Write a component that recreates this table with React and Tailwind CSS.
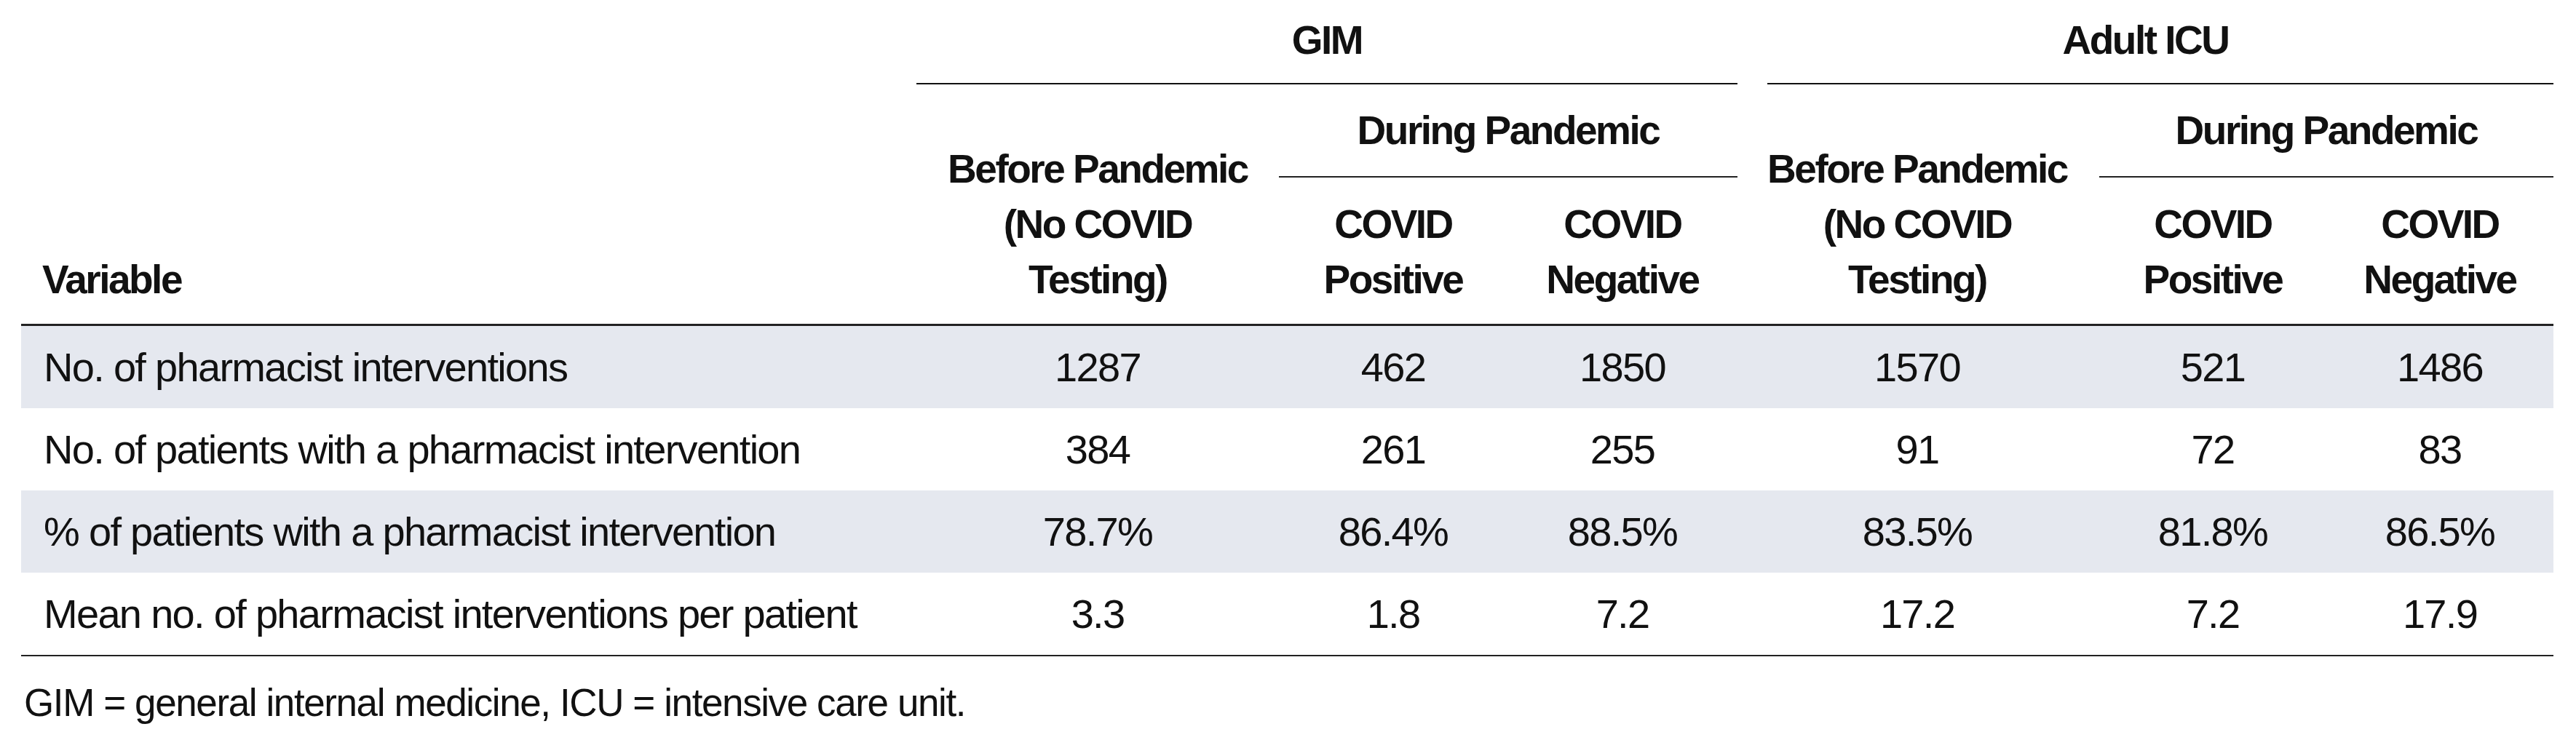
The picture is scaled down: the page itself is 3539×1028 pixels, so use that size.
import React from "react";

const font = "font-['Liberation_Sans',Arial,sans-serif]";

const cols = "grid grid-cols-[1230px_498px_314px_316px_41px_412px_44px_312px_312px]";

const rows = [
  { label: "No. of pharmacist interventions", values: ["1287", "462", "1850", "1570", "521", "1486"], shaded: true },
  { label: "No. of patients with a pharmacist intervention", values: ["384", "261", "255", "91", "72", "83"] },
  { label: "% of patients with a pharmacist intervention", values: ["78.7%", "86.4%", "88.5%", "83.5%", "81.8%", "86.5%"], shaded: true },
  { label: "Mean no. of pharmacist interventions per patient", values: ["3.3", "1.8", "7.2", "17.2", "7.2", "17.9"] },
];

// column start classes for the six value cells
const valueCols = ["col-start-2", "col-start-3", "col-start-4", "col-start-6", "col-start-8", "col-start-9"];

const Stack = ({ className, lines }) => (
  <div className={`${className} self-end pb-[23px] flex flex-col items-center whitespace-nowrap`}>
    {lines.map((l) => (
      <span key={l}>{l}</span>
    ))}
  </div>
);

const HeaderGroup = ({ title, titleCol, lineCol, beforeCol, duringCol, posCol, negCol }) => (
  <>
    <div className={`${titleCol} row-start-1 flex items-center justify-center pb-[4px]`}>{title}</div>
    <div className={`${lineCol} row-start-2 bg-[#111]`} />
    <Stack className={`${beforeCol} row-start-3 row-end-6`} lines={["Before Pandemic", "(No COVID", "Testing)"]} />
    <div className={`${duringCol} row-start-3 flex items-center justify-center whitespace-nowrap`}>During Pandemic</div>
    <div className={`${duringCol} row-start-4 bg-[#222]`} />
    <Stack className={`${posCol} row-start-5`} lines={["COVID", "Positive"]} />
    <Stack className={`${negCol} row-start-5`} lines={["COVID", "Negative"]} />
  </>
);

export default function App() {
  return (
    <div className={`min-h-screen bg-white text-[#111] ${font}`}>
      <div className="ml-[29px] w-[3479px]">
        {/* header */}
        <div
          className={`${cols} grid-rows-[114px_2px_126px_2px_201px_3px] text-[55px] font-bold leading-[76px] tracking-[-2.5px]`}
        >
          <div className="col-start-1 row-start-1 row-end-6 self-end pb-[23px] pl-[29px]">Variable</div>
          <HeaderGroup
            title="GIM"
            titleCol="col-start-2 col-end-5"
            lineCol="col-start-2 col-end-5"
            beforeCol="col-start-2"
            duringCol="col-start-3 col-end-5"
            posCol="col-start-3"
            negCol="col-start-4"
          />
          <HeaderGroup
            title="Adult ICU"
            titleCol="col-start-5 col-end-10"
            lineCol="col-start-6 col-end-10"
            beforeCol="col-start-6"
            duringCol="col-start-8 col-end-10"
            posCol="col-start-8"
            negCol="col-start-9"
          />
          <div className="col-start-1 col-end-10 row-start-6 bg-[#222]" />
        </div>

        {/* body */}
        {rows.map((row) => (
          <div
            key={row.label}
            className={`${cols} h-[113px] items-center text-[56px] leading-[76px] tracking-[-1.7px] whitespace-nowrap ${
              row.shaded ? "bg-[#e5e8ef]" : ""
            }`}
          >
            <div className="col-start-1 pl-[31px]">{row.label}</div>
            {row.values.map((v, i) => (
              <div key={i} className={`${valueCols[i]} row-start-1 text-center`}>
                {v}
              </div>
            ))}
          </div>
        ))}
        <div className="h-[2px] bg-[#222]" />
      </div>

      <p className="ml-[33px] pt-[26px] text-[53px] leading-[76px] tracking-[-1.4px]">
        GIM = general internal medicine, ICU = intensive care unit.
      </p>
    </div>
  );
}
